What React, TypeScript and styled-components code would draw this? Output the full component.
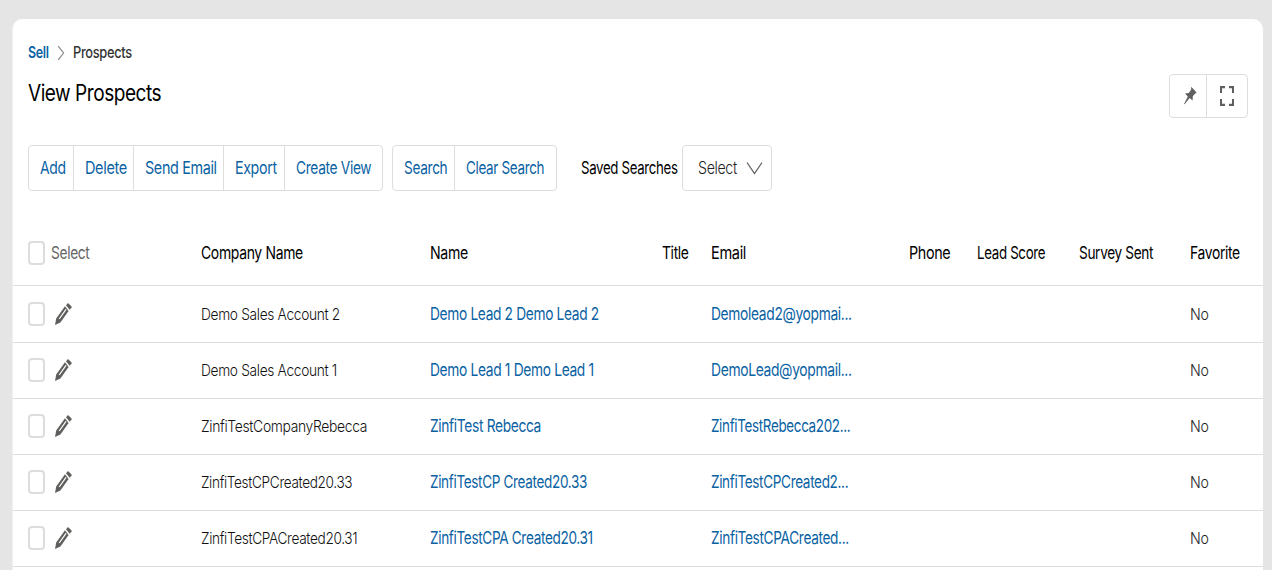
import React, { useLayoutEffect, useRef, useState } from "react";
import styled, { createGlobalStyle } from "styled-components";

const GlobalStyle = createGlobalStyle`
  * { box-sizing: border-box; }
  html, body { margin: 0; padding: 0; }
  body {
    height: 570px;
    overflow: hidden;
    background: #e5e5e5;
    font-family: Inter, "Liberation Sans", sans-serif;
    font-variant-ligatures: none;
  }
`;

const LINK = "#0a62a3";
const LINE = "#dddddd";

type Tone = { $size: number; $weight?: number; $color?: string };

const TextBox = styled.span<{ $width: number }>`
  display: block;
  flex: none;
  width: ${(p) => p.$width}px;
  white-space: nowrap;
`;

const TextRun = styled.span<Tone>`
  display: inline-block;
  vertical-align: top;
  transform-origin: 0 50%;
  line-height: 24px;
  letter-spacing: -0.025em;
  font-size: ${(p) => p.$size}px;
  font-weight: ${(p) => p.$weight ?? 400};
  color: ${(p) => p.$color ?? "#111"};
`;

/* Condensed text: the run is narrowed to the given width. */
function Text({ width, size, weight, color, children }: {
  width: number; size: number; weight?: number; color?: string; children: string;
}) {
  const ref = useRef<HTMLSpanElement>(null);
  const [scale, setScale] = useState(1);
  useLayoutEffect(() => {
    if (ref.current) setScale(width / ref.current.offsetWidth);
  }, [width, children]);
  return (
    <TextBox $width={width}>
      <TextRun ref={ref} $size={size} $weight={weight} $color={color} style={{ transform: `scaleX(${scale})` }}>
        {children}
      </TextRun>
    </TextBox>
  );
}

const Page = styled.div`
  height: 570px;
  padding: 19px 9px 0 12px;
  overflow: hidden;
`;

const Card = styled.main`
  height: 570px;
  border-left: 1px solid #f0f0f0;
  border-radius: 10px;
  background: #fff;
`;

const Header = styled.header`
  display: flex;
  justify-content: space-between;
  height: 126px;
  padding: 21px 15px 0 14.5px;
`;

const Breadcrumb = styled.nav`
  display: flex;
  align-items: center;
  height: 24px;
  svg { margin: 1px 8px 0 8px; }
`;

const Title = styled.h1`
  margin: 17px 0 0;
  font-size: 22px;
`;

const ButtonGroup = styled.div<{ $height: number }>`
  display: flex;
  flex: none;
  height: ${(p) => p.$height}px;
  border: 1px solid ${LINE};
  border-radius: 4px;
`;

const GroupButton = styled.button<{ $width: number; $pad?: number }>`
  display: flex;
  align-items: center;
  flex: none;
  width: ${(p) => p.$width}px;
  padding: 0 0 0 ${(p) => p.$pad ?? 11}px;
  border: 0;
  background: none;
  font-family: inherit;
  & + & { border-left: 1px solid ${LINE}; }
`;

const IconGroup = styled(ButtonGroup)`
  margin-top: 34px;
`;

const Toolbar = styled.div`
  display: flex;
  align-items: center;
  height: 46px;
  padding-left: 15px;
`;

const SearchGroup = styled(ButtonGroup)`
  margin: 0 24px 0 9px;
`;

const SavedSelect = styled.div`
  display: flex;
  align-items: center;
  width: 90px;
  height: 46px;
  margin-left: 4px;
  padding-left: 14.5px;
  border: 1px solid ${LINE};
  border-radius: 4px;
  svg { margin-left: 9px; }
`;

const Table = styled.div`
  margin-top: 28px;
`;

const Row = styled.div<{ $height: number }>`
  display: grid;
  grid-template-columns: 173px 229px 231.5px 49.5px 197.5px 68px 102.5px 110.5px 1fr;
  align-items: center;
  height: ${(p) => p.$height}px;
  padding-left: 15px;
  padding-bottom: 1px;
  border-bottom: 1px solid ${LINE};
`;

const HeadRow = styled(Row)`
  padding-top: 1px;
  padding-bottom: 0;
`;

const FirstRow = styled(Row)`
  padding-bottom: 0;
`;

const SelectCell = styled.div`
  display: flex;
  align-items: center;
  gap: 6px;
`;

const Checkbox = styled.span`
  width: 17px;
  height: 24px;
  border: 2px solid ${LINE};
  border-radius: 4px;
`;

const PencilIcon = styled.svg`
  margin-left: 3px;
`;

const Pencil = () => (
  <PencilIcon width="20" height="24" viewBox="0 0 20 24">
    <path d="M1 23 L2.2 16.6 L11 4.2 L14.6 9 L6.4 20.4 Z" fill="#5f5f5d" />
    <path d="M5.2 17 L12 7.4" stroke="#fff" strokeWidth="1.2" />
    <path d="M12 3.2 L14 1 L17.6 4.4 L17.5 5.8 L15.7 7.8 Z" fill="#5f5f5d" />
  </PencilIcon>
);

const Pin = () => (
  <svg width="15" height="22" viewBox="0 0 15 22">
    <path d="M8.2 1.8 L13.6 7.6 L12.2 8.4 L9.8 11.2 L9.6 15.6 L6.6 13 L1.6 19.2 L1 19 L4.8 11.6 L2 8.6 L5.8 8 L8.2 4.6 Z" fill="#5f5f5d" />
  </svg>
);

const Expand = () => (
  <svg width="16" height="22" viewBox="0 0 16 22" fill="none" stroke="#5f5f5d">
    <path strokeWidth="2.2" d="M1 2.1H6M10 2.1H15M1 19.9H6M10 19.9H15" />
    <path strokeWidth="2" d="M2 1V8M14 1V8M2 14V21M14 14V21" />
  </svg>
);

const actions: [string, number, number][] = [
  ["Add", 44, 25.5], ["Delete", 60, 41.5], ["Send Email", 90, 71.5], ["Export", 61, 41.5], ["Create View", 98, 75.5],
];

const headings: [string, number][] = [
  ["Company Name", 101.5], ["Name", 38], ["Title", 27], ["Email", 35], ["Phone", 41],
  ["Lead Score", 68.5], ["Survey Sent", 74], ["Favorite", 50],
];

const prospects: { company: [string, number]; name: [string, number]; email: [string, number] }[] = [
  { company: ["Demo Sales Account 2", 138.5], name: ["Demo Lead 2 Demo Lead 2", 169], email: ["Demolead2@yopmai...", 140.5] },
  { company: ["Demo Sales Account 1", 136], name: ["Demo Lead 1 Demo Lead 1", 164], email: ["DemoLead@yopmail...", 141] },
  { company: ["ZinfiTestCompanyRebecca", 166], name: ["ZinfiTest Rebecca", 111], email: ["ZinfiTestRebecca202...", 139] },
  { company: ["ZinfiTestCPCreated20.33", 151], name: ["ZinfiTestCP Created20.33", 157], email: ["ZinfiTestCPCreated2...", 137] },
  { company: ["ZinfiTestCPACreated20.31", 156.5], name: ["ZinfiTestCPA Created20.31", 163], email: ["ZinfiTestCPACreated...", 138] },
];

export default function App() {
  return (
    <Page>
      <GlobalStyle />
      <Card>
        <Header>
          <div>
            <Breadcrumb>
              <Text width={21} size={16} weight={600} color={LINK}>Sell</Text>
              <svg width="8" height="16" viewBox="0 0 8 16" fill="none" stroke="#888" strokeWidth="1.2">
                <path d="M1.2 1.2L6.6 8L1.2 14.8" />
              </svg>
              <Text width={58.5} size={16} weight={500} color="#333">Prospects</Text>
            </Breadcrumb>
            <Title>
              <Text width={133} size={22.5} color="#000">View Prospects</Text>
            </Title>
          </div>
          <IconGroup $height={44}>
            <GroupButton $width={36} $pad={13} aria-label="Pin"><Pin /></GroupButton>
            <GroupButton $width={41} $pad={12} aria-label="Full screen"><Expand /></GroupButton>
          </IconGroup>
        </Header>
        <Toolbar>
          <ButtonGroup $height={46}>
            {actions.map(([label, width, textWidth]) => (
              <GroupButton key={label} $width={width}>
                <Text width={textWidth} size={17.5} color={LINK}>{label}</Text>
              </GroupButton>
            ))}
          </ButtonGroup>
          <SearchGroup $height={46}>
            <GroupButton $width={61}><Text width={43} size={17.5} color={LINK}>Search</Text></GroupButton>
            <GroupButton $width={102}><Text width={78.5} size={17.5} color={LINK}>Clear Search</Text></GroupButton>
          </SearchGroup>
          <Text width={97} size={17.5} color="#000">Saved Searches</Text>
          <SavedSelect>
            <Text width={39} size={17.5} weight={350} color="#222">Select</Text>
            <svg width="17" height="14" viewBox="0 0 17 14" fill="none" stroke="#666" strokeWidth="1.3">
              <path d="M1 1.5L8.5 12.5L16 1.5" />
            </svg>
          </SavedSelect>
        </Toolbar>
        <Table>
          <HeadRow $height={67}>
            <SelectCell>
              <Checkbox />
              <Text width={38.5} size={17.5} color="#666">Select</Text>
            </SelectCell>
            {headings.map(([label, width]) => (
              <Text key={label} width={width} size={17.5} color="#000">{label}</Text>
            ))}
          </HeadRow>
          {prospects.map(({ company, name, email }, i) => {
            const Line = i === 0 ? FirstRow : Row;
            return (
              <Line key={company[0]} $height={i === 0 ? 57 : 56}>
                <SelectCell><Checkbox /><Pencil /></SelectCell>
                <Text width={company[1]} size={16.5} weight={350}>{company[0]}</Text>
                <Text width={name[1]} size={17.5} color={LINK}>{name[0]}</Text>
                <span />
                <Text width={email[1]} size={17.5} color={LINK}>{email[0]}</Text>
                <span /><span /><span />
                <Text width={18} size={16.5} weight={350} color="#222">No</Text>
              </Line>
            );
          })}
        </Table>
      </Card>
    </Page>
  );
}
